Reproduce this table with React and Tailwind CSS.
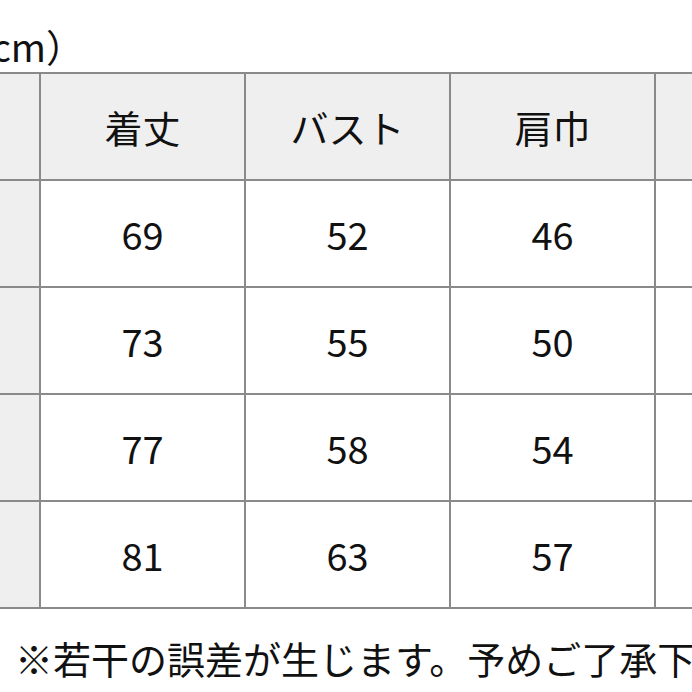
export default function App() {
  const font = { fontFamily: '"Noto Sans CJK JP", "Noto Sans", sans-serif' };
  const headers = ["", "着丈", "バスト", "肩巾", "袖丈"];
  const rows = [
    ["S", "69", "52", "46", "60"],
    ["M", "73", "55", "50", "62"],
    ["L", "77", "58", "54", "64"],
    ["XL", "81", "63", "57", "66"],
  ];
  return (
    <div className="w-[692px] h-[692px] overflow-hidden bg-white text-[#111]" style={font}>
      <div className="ml-[-166px] w-[1100px]">
        <div className="h-[72px] w-[250px] flex items-center justify-end pt-[20px] text-[38px] leading-none whitespace-nowrap">
          <span className="shrink-0">（単位：cm）</span>
        </div>
        <div className="border-t-2 border-l-2 border-[#8a8a8a] w-max">
          <div className="flex">
            {headers.map((h, i) => (
              <div
                key={i}
                className="w-[205px] h-[107px] border-r-2 border-b-2 border-[#8a8a8a] bg-[#efefef] flex items-center justify-center text-[38px] leading-none"
              >
                {h}
              </div>
            ))}
          </div>
          {rows.map((r, ri) => (
            <div key={ri} className="flex">
              {r.map((c, ci) => (
                <div
                  key={ci}
                  className={
                    ci === 0
                      ? "w-[205px] h-[107px] border-r-2 border-b-2 border-[#8a8a8a] bg-[#efefef] flex items-center justify-center text-[38px] leading-none"
                      : "w-[205px] h-[107px] border-r-2 border-b-2 border-[#8a8a8a] bg-white flex items-center justify-center text-[38px] leading-none"
                  }
                >
                  {c}
                </div>
              ))}
            </div>
          ))}
        </div>
        <div className="pl-[181px] pt-[30px] text-[38px] leading-none whitespace-nowrap">
          ※若干の誤差が生じます。予めご了承下さい。
        </div>
      </div>
    </div>
  );
}
